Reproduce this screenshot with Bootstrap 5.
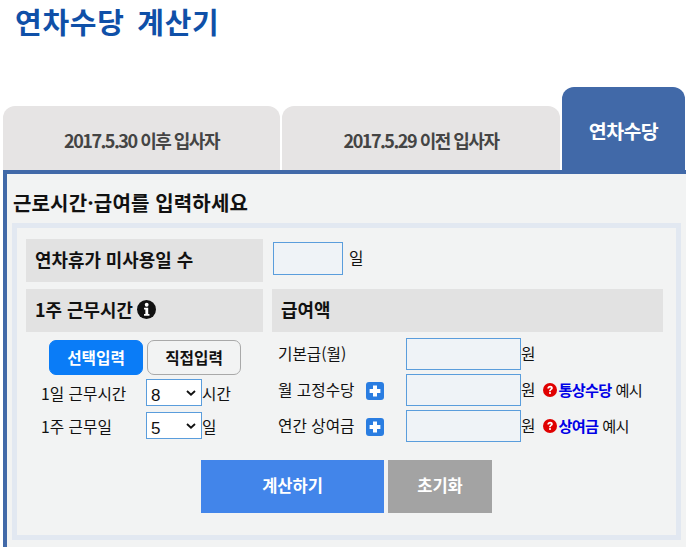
<!DOCTYPE html>
<html lang="ko">
<head>
<meta charset="utf-8">
<title>연차수당 계산기</title>
<link href="https://cdn.jsdelivr.net/npm/bootstrap@5.3.0/dist/css/bootstrap.min.css" rel="stylesheet">
<style>
html,body{height:547px;overflow:hidden;background:#fff}
body{font-family:"Noto Sans CJK KR","Liberation Sans",sans-serif;color:#111;font-size:15.7px;line-height:1.3;padding-left:3px;width:686px}
.page-title{font-size:29px;font-weight:700;color:#0f50a8;margin:0 0 0 12px;height:87px;line-height:42px;letter-spacing:.7px;word-spacing:4px}
.tab-row{display:flex;align-items:flex-end;gap:2px;height:83px;position:relative;z-index:1}
.tab-item{height:64px;background:#e6e4e4;color:#444;font-weight:700;font-size:18px;letter-spacing:-1.5px;border-radius:12px 12px 0 0;display:flex;align-items:center;justify-content:center;padding-top:5px}
.tab-one{width:277px}
.tab-two{width:278px}
.tab-three{width:123px;height:85px;margin-bottom:-2px;background:#4169a8;color:#fff;font-size:19.5px;letter-spacing:-.6px;padding:2px 0 0}
.panel-box{width:690px;height:400px;background:#f2f3f3;border-top:4px solid #4169a8;border-left:4px solid #4169a8;padding:0 0 0 5px}
.panel-head{font-size:20px;font-weight:700;letter-spacing:.15px;margin:0;padding-left:1px;height:49px;line-height:57px;color:#111}
.inner-box{width:669px;height:317px;border:5px solid #e2e8f1;padding:11px 0 0 9px}
.label-bar{background:#e2e2e2;height:43px;display:flex;align-items:center;padding:0 0 2px 9px;font-size:17.9px;font-weight:700;color:#111}
.bar-left{width:237px}
.bar-right{width:391px}
.first-row{display:flex;margin-bottom:7px}
.first-input{width:70px;height:33px;margin:3px 6px 0 10px}
.field-input{background:#eff3f7;border:1px solid #5a9ddc;border-radius:0;box-shadow:none;padding:0}
.day-unit{margin-top:9px}
.main-grid{display:grid;grid-template-columns:237px 391px;column-gap:9px}
.mode-row{display:flex;gap:4px;margin:8px 0 4px 23px}
.mode-btn{width:94px;height:35px;padding:0;font-size:15.7px;font-weight:700;border-radius:7px;line-height:33px}
.mode-on{background:#0a7cf7;border:1px solid #0a7cf7;color:#fff}
.mode-off{background:#f2f3f3;border:1px solid #a9a9a9;color:#111}
.pick-row{display:flex;align-items:center;height:27px;margin:0 0 6px 15px}
.pick-label{width:105px;padding-top:4px}
.pick-unit{padding-top:4px}
.pick-select{width:56px;height:27px;border:1px solid #5a9ddc;font-family:"Liberation Sans",sans-serif;font-size:17px;line-height:1;padding:5px 0 0 4px;border-radius:0;color:#111;appearance:none;background:#fff url("data:image/svg+xml,%3Csvg xmlns='http://www.w3.org/2000/svg' viewBox='0 0 10 6'%3E%3Cpath d='M1 1l4 3.6L9 1' fill='none' stroke='%23111' stroke-width='1.9'/%3E%3C/svg%3E") no-repeat right 5px center/10px 6px}
.pay-list{display:flex;flex-direction:column;gap:4px;margin:6px 0 0 6px}
.pay-row{display:flex;align-items:center;height:32px}
.pay-label{width:88px;white-space:nowrap;padding-top:1px}
.plus-slot{width:40px;display:flex}
.plus-box{width:18px;height:18px;margin-top:2px;background:#2a7de1;border-radius:3px;display:block}
.pay-input{width:115px;height:32px}
.help-wrap{display:flex;align-items:center;margin-left:8px;font-size:15.2px;letter-spacing:-.7px}
.help-icon{width:14px;height:14px;margin-right:1px;flex:none}
.help-link{color:#0000e6;font-weight:700;text-decoration:none;margin-right:4px}
.info-icon{width:19px;height:19px;margin-left:4px}
.action-row{display:flex;gap:4px;margin:15px 0 0 175px}
.go-btn,.reset-btn{height:53px;border:0;border-radius:0;color:#fff;font-weight:700;font-size:16.5px;padding:0 0 2px}
.go-btn{width:183px;background:#4285ea}
.reset-btn{width:104px;background:#a3a3a3}
</style>
</head>
<body>
<h1 class="page-title">연차수당 계산기</h1>
<div class="tab-row">
  <div class="tab-item tab-one">2017.5.30 이후 입사자</div>
  <div class="tab-item tab-two">2017.5.29 이전 입사자</div>
  <div class="tab-item tab-three">연차수당</div>
</div>
<div class="panel-box">
  <h2 class="panel-head">근로시간·급여를 입력하세요</h2>
  <div class="inner-box">
    <div class="first-row">
      <div class="label-bar bar-left">연차휴가 미사용일 수</div>
      <input type="text" class="form-control field-input first-input" aria-label="연차휴가 미사용일 수">
      <span class="day-unit">일</span>
    </div>
    <div class="main-grid">
      <div>
        <div class="label-bar bar-left">1주 근무시간
          <svg class="info-icon" viewBox="0 0 20 20" aria-hidden="true"><circle cx="10" cy="10" r="10" fill="#111"/><circle cx="10.2" cy="5" r="2" fill="#fff"/><path d="M7.4 8.2h4.4v6.6h1.3v1.7H7.4v-1.7h1.4v-4.9H7.4z" fill="#fff"/></svg>
        </div>
        <div class="mode-row">
          <button type="button" class="btn mode-btn mode-on">선택입력</button>
          <button type="button" class="btn mode-btn mode-off">직접입력</button>
        </div>
        <div class="pick-row">
          <span class="pick-label">1일 근무시간</span>
          <select class="pick-select" aria-label="1일 근무시간"><option>8</option></select>
          <span class="pick-unit">시간</span>
        </div>
        <div class="pick-row">
          <span class="pick-label">1주 근무일</span>
          <select class="pick-select" aria-label="1주 근무일"><option>5</option></select>
          <span class="pick-unit">일</span>
        </div>
      </div>
      <div>
        <div class="label-bar bar-right">급여액</div>
        <div class="pay-list">
          <div class="pay-row">
            <span class="pay-label">기본급(월)</span><span class="plus-slot"></span>
            <input type="text" class="form-control field-input pay-input" aria-label="기본급(월)"><span>원</span>
          </div>
          <div class="pay-row">
            <span class="pay-label">월 고정수당</span>
            <span class="plus-slot"><svg class="plus-box" viewBox="0 0 18 18" aria-hidden="true"><path d="M7 3.6h4v3.4h3.4v4H11v3.4H7V11H3.6V7H7z" fill="#fff"/></svg></span>
            <input type="text" class="form-control field-input pay-input" aria-label="월 고정수당"><span>원</span>
            <span class="help-wrap">
              <svg class="help-icon" viewBox="0 0 14 14" aria-hidden="true"><circle cx="7" cy="7" r="7" fill="#e00000"/><path d="M4.3 5.4C4.4 3.7 5.6 2.8 7.1 2.8c1.6 0 2.7.9 2.7 2.2 0 1-.6 1.5-1.3 2-.5.4-.7.6-.7 1.2H6.1c0-1 .3-1.5 1-2 .5-.4.8-.6.8-1.1 0-.4-.3-.7-.8-.7s-.9.3-1 1z" fill="#fff"/><rect x="6.1" y="9.1" width="1.8" height="1.8" fill="#fff"/></svg>
              <a href="#" class="help-link">통상수당</a>예시
            </span>
          </div>
          <div class="pay-row">
            <span class="pay-label">연간 상여금</span>
            <span class="plus-slot"><svg class="plus-box" viewBox="0 0 18 18" aria-hidden="true"><path d="M7 3.6h4v3.4h3.4v4H11v3.4H7V11H3.6V7H7z" fill="#fff"/></svg></span>
            <input type="text" class="form-control field-input pay-input" aria-label="연간 상여금"><span>원</span>
            <span class="help-wrap">
              <svg class="help-icon" viewBox="0 0 14 14" aria-hidden="true"><circle cx="7" cy="7" r="7" fill="#e00000"/><path d="M4.3 5.4C4.4 3.7 5.6 2.8 7.1 2.8c1.6 0 2.7.9 2.7 2.2 0 1-.6 1.5-1.3 2-.5.4-.7.6-.7 1.2H6.1c0-1 .3-1.5 1-2 .5-.4.8-.6.8-1.1 0-.4-.3-.7-.8-.7s-.9.3-1 1z" fill="#fff"/><rect x="6.1" y="9.1" width="1.8" height="1.8" fill="#fff"/></svg>
              <a href="#" class="help-link">상여금</a>예시
            </span>
          </div>
        </div>
      </div>
    </div>
    <div class="action-row">
      <button type="button" class="btn go-btn">계산하기</button>
      <button type="button" class="btn reset-btn">초기화</button>
    </div>
  </div>
</div>
<script src="https://cdn.jsdelivr.net/npm/bootstrap@5.3.0/dist/js/bootstrap.bundle.min.js"></script>
</body>
</html>
